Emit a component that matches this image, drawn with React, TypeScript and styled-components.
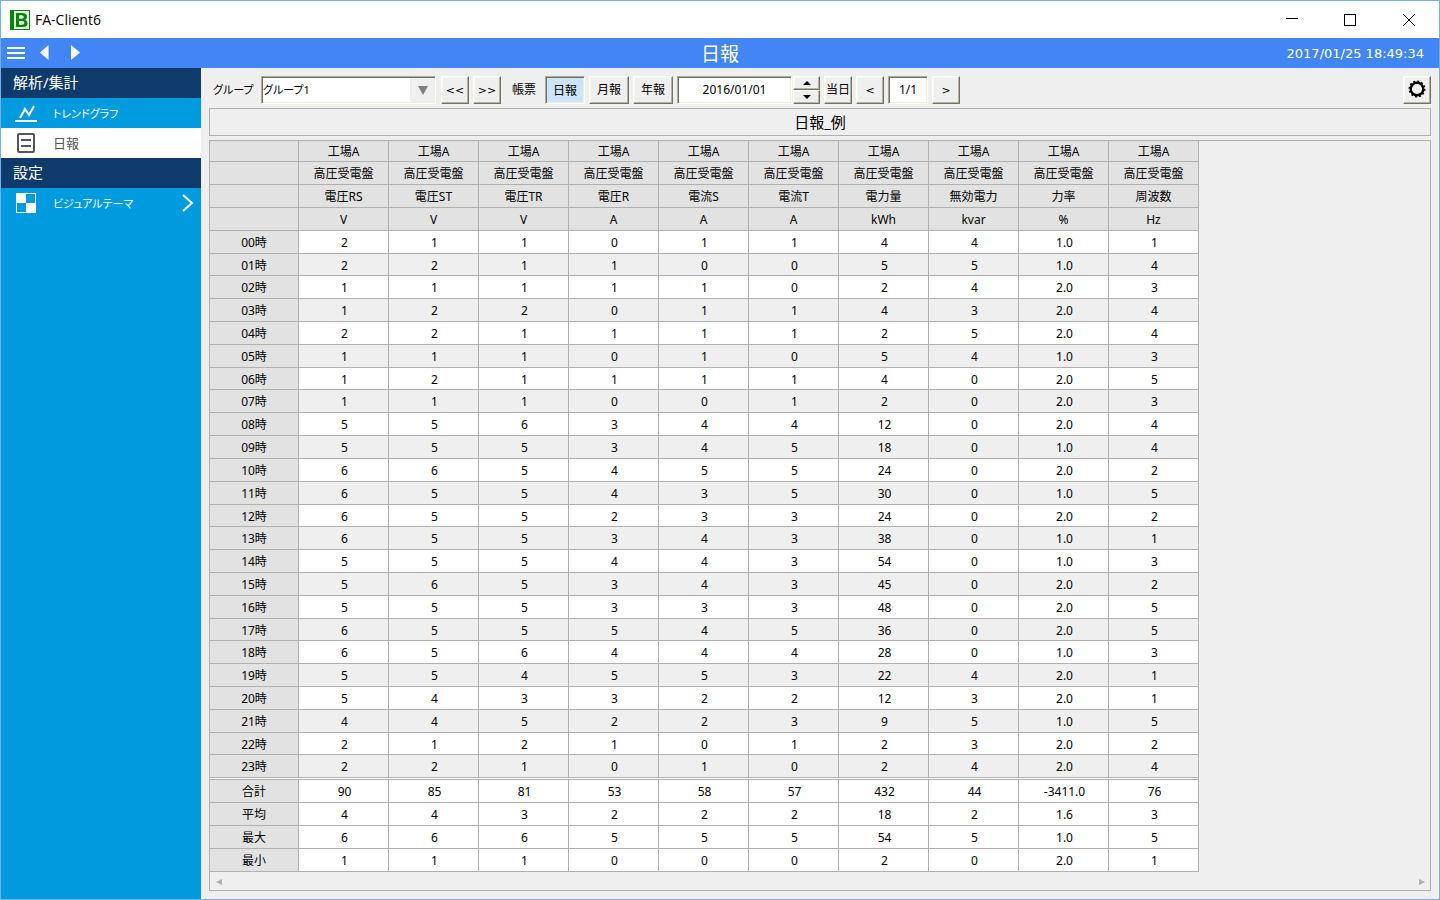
import React, { useState } from "react";
import styled, { createGlobalStyle, css } from "styled-components";

const Global = createGlobalStyle`
  *, *::before, *::after { box-sizing: border-box; }
  body { margin: 0; background: #efefef; }
  body, button, input, select {
    font-family: "Noto Sans", "Noto Sans CJK JP", sans-serif;
    font-size: 12px;
    color: #000;
  }
`;

const Window = styled.div`
  display: flex;
  flex-direction: column;
  min-height: 100vh;
  border: 1px solid #78b0ec;
  background: #efefef;
`;

const TitleBar = styled.header`
  display: flex;
  align-items: center;
  height: 37px;
  padding: 0 8px;
  background: #fff;
`;

const AppName = styled.span`
  flex: 1;
  margin-left: 4px;
  font-family: "Open Sans", sans-serif;
  font-size: 14px;
  line-height: 20px;
`;

const WindowButton = styled.button`
  display: flex;
  align-items: center;
  justify-content: center;
  width: 46px;
  height: 32px;
  padding: 0;
  border: 0;
  background: transparent;
`;

const WindowButtons = styled.div`
  display: flex;
  gap: 12px;
`;

const NavBar = styled.div`
  display: grid;
  grid-template-columns: 1fr auto 1fr;
  align-items: center;
  height: 30px;
  background: #4285f4;
  color: #fff;
`;

const NavButtons = styled.div`
  display: flex;
  align-items: center;
  gap: 14px;
  padding-left: 6px;
`;

const NavButton = styled.button`
  display: flex;
  padding: 0;
  border: 0;
  background: transparent;
`;

const PageTitle = styled.h1`
  margin: 0;
  padding-top: 2px;
  font-size: 19px;
  font-weight: 400;
  line-height: 28px;
`;

const Clock = styled.time`
  justify-self: end;
  padding-right: 15px;
  font-family: "DejaVu Sans", sans-serif;
  font-size: 13px;
`;

const Body = styled.div`
  display: flex;
  flex: 1;
`;

const Sidebar = styled.nav`
  flex: none;
  width: 200px;
  background: #009bde;
`;

const SideHeading = styled.h2`
  height: 30px;
  margin: 0;
  padding-left: 12px;
  background: #0e3a6c;
  color: #fff;
  font-size: 15px;
  font-weight: 400;
  line-height: 28px;
`;

const SideLink = styled.a<{ $active?: boolean }>`
  display: grid;
  grid-template-columns: 22px 1fr auto;
  align-items: center;
  column-gap: 16px;
  height: 30px;
  padding: 0 7px 0 14px;
  background: ${(p) => (p.$active ? "#fff" : "#009bde")};
  color: ${(p) => (p.$active ? "#555" : "#fff")};
  text-decoration: none;

  svg { justify-self: center; }
`;

const SideText = styled.span<{ $kana?: boolean }>`
  padding-bottom: ${(p) => (p.$kana ? 0 : 2)}px;
  font-size: ${(p) => (p.$kana ? 11 : 13)}px;
  font-feature-settings: "palt";
`;

const Main = styled.main`
  display: flex;
  flex: 1;
  flex-direction: column;
  min-width: 0;
  padding: 7px 8px 8px;
`;

const Toolbar = styled.form`
  display: flex;
  align-items: center;
  height: 30px;
  margin-bottom: 3px;
`;

const Label = styled.label`
  width: 44px;
  margin: 0 4px;
  padding-bottom: 2px;
  font-size: 11px;
  font-feature-settings: "palt";
`;

const ReportLabel = styled.span`
  margin: 0 9px 0 11px;
  padding-bottom: 2px;
`;

const raised = css`
  border: 1px solid;
  border-color: #fffff8 #75725f #75725f #fffff8;
  box-shadow: inset -1px -1px 0 #b5b1a4, inset 1px 1px 0 #f8f8f0;
`;

const sunken = css`
  border: 1px solid;
  border-color: #aeab9b #fffff8 #fffff8 #aeab9b;
  box-shadow: inset 1px 1px 0 #716e62, inset -1px -1px 0 #efefdf;
`;

const ToolButton = styled.button<{ $wide?: boolean; $pressed?: boolean; $symbol?: boolean }>`
  display: flex;
  align-items: center;
  justify-content: center;
  width: ${(p) => (p.$wide ? 40 : 28)}px;
  height: 28px;
  padding: ${(p) => (p.$pressed || p.$symbol ? 0 : "0 0 2px")};
  background: ${(p) => (p.$pressed ? "#cce4f8" : "#efefef")};
  white-space: nowrap;
  ${(p) => p.$symbol && css`
    font-family: "DejaVu Sans", sans-serif;
    font-size: 11px;
  `}
  ${(p) => (p.$pressed ? sunken : raised)}
`;

const ButtonGroup = styled.div<{ $gap: number; $before?: number }>`
  display: flex;
  gap: ${(p) => p.$gap}px;
  margin-left: ${(p) => p.$before ?? 0}px;
`;

const SelectBox = styled.div`
  position: relative;
  display: flex;
  width: 175px;
  height: 28px;
  background: #fff;
  ${sunken}
`;

const Select = styled.select`
  flex: 1;
  margin: 1px;
  padding: 0 24px 2px 0;
  border: 0;
  appearance: none;
  background: linear-gradient(#efefef, #efefef) right / 24px 100% no-repeat #fff;
  font-size: 11px;
  font-feature-settings: "palt";
`;

const SelectArrow = styled.svg`
  position: absolute;
  top: 9px;
  right: 7px;
  pointer-events: none;
`;

const TextBox = styled.input<{ $w: number }>`
  width: ${(p) => p.$w}px;
  height: 28px;
  padding: 0 0 2px;
  background: #fff;
  text-align: center;
  ${sunken}
`;

const Spinner = styled.div`
  display: flex;
  flex-direction: column;
`;

const SpinButton = styled.button`
  display: flex;
  align-items: center;
  justify-content: center;
  width: 27px;
  height: 14px;
  padding: 0;
  background: #efefef;
  ${raised}
`;

const Spacer = styled.div`
  flex: 1;
`;

const ReportTitle = styled.h2`
  height: 28px;
  margin: 0 0 4px;
  border: 1px solid #b0b0b0;
  font-size: 15px;
  font-weight: 400;
  line-height: 26px;
  text-align: center;
`;

const Sheet = styled.section`
  display: flex;
  flex: 1;
  flex-direction: column;
  border: 1px solid #b0b0b0;
`;

const Table = styled.table`
  width: 989px;
  border-collapse: separate;
  border-spacing: 0;
  table-layout: fixed;
`;

const cell = css`
  padding: 2px 0 0;
  border: solid #b0b0b0;
  border-width: 0 1px 1px 0;
  font-weight: 400;
  line-height: 18px;
  text-align: center;
`;

const Th = styled.th`
  ${cell}
  background: #e2e2e2;
`;

const Td = styled.td<{ $shade?: boolean }>`
  ${cell}
  padding-left: 2px;
  background: ${(p) => (p.$shade ? "#efefef" : "#fff")};
`;

const Row = styled.tr<{ $height?: number }>`
  height: ${(p) => p.$height ?? 23}px;
`;

const Divider = styled.td`
  height: 2px;
  padding: 0;
  border: solid #b0b0b0;
  border-width: 0 1px 1px 0;
  background: #fff;
`;

const ScrollBar = styled.div`
  display: flex;
  align-items: center;
  justify-content: space-between;
  flex: 1;
  min-height: 16px;
  padding: 2px 5px 0 6px;
`;

const ScrollButton = styled.button`
  display: flex;
  padding: 0;
  border: 0;
  background: transparent;
`;

const names = ["電圧RS", "電圧ST", "電圧TR", "電圧R", "電流S", "電流T", "電力量", "無効電力", "力率", "周波数"];
const units = ["V", "V", "V", "A", "A", "A", "kWh", "kvar", "%", "Hz"];

const hours = [
  "2 1 1 0 1 1 4 4 1.0 1",
  "2 2 1 1 0 0 5 5 1.0 4",
  "1 1 1 1 1 0 2 4 2.0 3",
  "1 2 2 0 1 1 4 3 2.0 4",
  "2 2 1 1 1 1 2 5 2.0 4",
  "1 1 1 0 1 0 5 4 1.0 3",
  "1 2 1 1 1 1 4 0 2.0 5",
  "1 1 1 0 0 1 2 0 2.0 3",
  "5 5 6 3 4 4 12 0 2.0 4",
  "5 5 5 3 4 5 18 0 1.0 4",
  "6 6 5 4 5 5 24 0 2.0 2",
  "6 5 5 4 3 5 30 0 1.0 5",
  "6 5 5 2 3 3 24 0 2.0 2",
  "6 5 5 3 4 3 38 0 1.0 1",
  "5 5 5 4 4 3 54 0 1.0 3",
  "5 6 5 3 4 3 45 0 2.0 2",
  "5 5 5 3 3 3 48 0 2.0 5",
  "6 5 5 5 4 5 36 0 2.0 5",
  "6 5 6 4 4 4 28 0 1.0 3",
  "5 5 4 5 5 3 22 4 2.0 1",
  "5 4 3 3 2 2 12 3 2.0 1",
  "4 4 5 2 2 3 9 5 1.0 5",
  "2 1 2 1 0 1 2 3 2.0 2",
  "2 2 1 0 1 0 2 4 2.0 4",
].map((r) => r.split(" "));

const totals: [string, string[]][] = [
  ["合計", "90 85 81 53 58 57 432 44 -3411.0 76".split(" ")],
  ["平均", "4 4 3 2 2 2 18 2 1.6 3".split(" ")],
  ["最大", "6 6 6 5 5 5 54 5 1.0 5".split(" ")],
  ["最小", "1 1 1 0 0 0 2 0 2.0 1".split(" ")],
];

const shortHours = [1, 6, 12, 17, 22];
const periods = ["日報", "月報", "年報"];

const Logo = () => (
  <svg width="22" height="22" viewBox="0 0 22 22" aria-hidden="true">
    <rect x="1" y="1" width="20" height="20" fill="#0a840a" />
    <rect x="5" y="2" width="15" height="18" fill="#e4f2e4" />
    <path
      fillRule="evenodd"
      fill="#0a840a"
      d="M7 4h6.500q4.500 0 4.500 3.700q0 2.400-2 3.100q2.600 .8 2.600 3.400q0 3.800-4.800 3.800H7zM10 6.300v3.400h2.800q2 0 2-1.700t-2-1.700zM10 12v3.700h3.200q2.200 0 2.200-1.900t-2.200-1.800z"
    />
  </svg>
);

const TrendIcon = () => (
  <svg width="22" height="18" viewBox="0 0 22 18" fill="none" stroke="#fff" strokeWidth="2" aria-hidden="true">
    <path d="M5 14L10 5L14 11L19 2" />
    <path d="M0 17H22" />
  </svg>
);

const ReportIcon = () => (
  <svg width="18" height="20" viewBox="0 0 18 20" fill="none" stroke="#555560" strokeWidth="2" aria-hidden="true">
    <rect x="1" y="1" width="16" height="18" rx="1" />
    <path d="M4 7H14M4 13H14" />
  </svg>
);

const ThemeIcon = () => (
  <svg width="20" height="20" viewBox="0 0 20 20" aria-hidden="true">
    <rect width="20" height="20" fill="#fff" />
    <path fill="#009bde" d="M10 1h9v9h-9zM1 10h9v9H1z" />
  </svg>
);

const GearIcon = () => (
  <svg width="18" height="18" viewBox="-9 -9 18 18" fill="none" stroke="#000" aria-hidden="true">
    <circle r="6.300" strokeWidth="2.400" />
    <circle r="7.800" strokeWidth="1.400" strokeDasharray="2 2.084" />
  </svg>
);

export default function App() {
  const [group, setGroup] = useState("グループ1");
  const [period, setPeriod] = useState("日報");
  const [date, setDate] = useState("2016/01/01");
  const [page, setPage] = useState("1/1");

  return (
    <Window>
      <Global />
      <TitleBar>
        <Logo />
        <AppName>FA-Client6</AppName>
        <WindowButtons>
          <WindowButton aria-label="最小化">
            <svg width="12" height="12" stroke="#000"><path d="M0 4.500H12" /></svg>
          </WindowButton>
          <WindowButton aria-label="最大化">
            <svg width="12" height="12" stroke="#000" fill="none"><rect x=".5" y=".5" width="11" height="11" /></svg>
          </WindowButton>
          <WindowButton aria-label="閉じる">
            <svg width="14" height="12" stroke="#000"><path d="M2 0L14 12M14 0L2 12" /></svg>
          </WindowButton>
        </WindowButtons>
      </TitleBar>

      <NavBar>
        <NavButtons>
          <NavButton aria-label="メニュー">
            <svg width="18" height="12" fill="#fff"><path d="M0 0h18v2H0zM0 5h18v2H0zM0 10h18v2H0z" /></svg>
          </NavButton>
          <NavButton aria-label="戻る">
            <svg width="10" height="16" fill="#fff"><path d="M9.500 0v15L1 7.500z" /></svg>
          </NavButton>
          <NavButton aria-label="進む">
            <svg width="25" height="16" fill="#fff"><path d="M8 0v15l9-7.500z" /></svg>
          </NavButton>
        </NavButtons>
        <PageTitle>日報</PageTitle>
        <Clock>2017/01/25 18:49:34</Clock>
      </NavBar>

      <Body>
        <Sidebar>
          <SideHeading>解析/集計</SideHeading>
          <SideLink href="#trend"><TrendIcon /><SideText $kana>トレンドグラフ</SideText></SideLink>
          <SideLink href="#daily" $active><ReportIcon /><SideText>日報</SideText></SideLink>
          <SideHeading>設定</SideHeading>
          <SideLink href="#theme">
            <ThemeIcon />
            <SideText $kana>ビジュアルテーマ</SideText>
            <svg width="12" height="18" fill="none" stroke="#fff" strokeWidth="2" aria-hidden="true">
              <path d="M1 1L10 9L1 17" />
            </svg>
          </SideLink>
        </Sidebar>

        <Main>
          <Toolbar onSubmit={(e) => e.preventDefault()}>
            <Label htmlFor="group">グループ</Label>
            <SelectBox>
              <Select id="group" value={group} onChange={(e) => setGroup(e.target.value)}>
                <option>グループ1</option>
              </Select>
              <SelectArrow width="10" height="9" fill="#808080" aria-hidden="true">
                <path d="M0 0h10L5 9z" />
              </SelectArrow>
            </SelectBox>
            <ButtonGroup $gap={4} $before={5}>
              <ToolButton type="button" $symbol>&lt;&lt;</ToolButton>
              <ToolButton type="button" $symbol>&gt;&gt;</ToolButton>
            </ButtonGroup>
            <ReportLabel>帳票</ReportLabel>
            <ButtonGroup $gap={4}>
              {periods.map((p) => (
                <ToolButton
                  key={p}
                  type="button"
                  $wide
                  $pressed={p === period}
                  aria-pressed={p === period}
                  onClick={() => setPeriod(p)}
                >
                  {p}
                </ToolButton>
              ))}
            </ButtonGroup>
            <ButtonGroup $gap={1} $before={4}>
              <TextBox $w={115} aria-label="日付" value={date} onChange={(e) => setDate(e.target.value)} />
              <Spinner>
                <SpinButton type="button" aria-label="次の日">
                  <svg width="8" height="4"><path d="M4 0l4 4H0z" /></svg>
                </SpinButton>
                <SpinButton type="button" aria-label="前の日">
                  <svg width="8" height="4"><path d="M0 0h8L4 4z" /></svg>
                </SpinButton>
              </Spinner>
            </ButtonGroup>
            <ButtonGroup $gap={4} $before={4}>
              <ToolButton type="button">当日</ToolButton>
              <ToolButton type="button" $symbol>&lt;</ToolButton>
              <TextBox $w={40} aria-label="ページ" value={page} onChange={(e) => setPage(e.target.value)} />
              <ToolButton type="button" $symbol>&gt;</ToolButton>
            </ButtonGroup>
            <Spacer />
            <ToolButton type="button" aria-label="設定"><GearIcon /></ToolButton>
          </Toolbar>

          <ReportTitle>日報_例</ReportTitle>

          <Sheet>
            <Table>
              <colgroup>
                <col style={{ width: 89 }} />
                {names.map((n) => <col key={n} />)}
              </colgroup>
              <thead>
                <Row $height={21}>
                  <Th />
                  {names.map((n) => <Th key={n}>工場A</Th>)}
                </Row>
                <Row>
                  <Th />
                  {names.map((n) => <Th key={n}>高圧受電盤</Th>)}
                </Row>
                <Row>
                  <Th />
                  {names.map((n) => <Th key={n} scope="col">{n}</Th>)}
                </Row>
                <Row>
                  <Th />
                  {units.map((u, i) => <Th key={i}>{u}</Th>)}
                </Row>
              </thead>
              <tbody>
                {hours.map((values, h) => (
                  <Row key={h} $height={shortHours.includes(h) ? 22 : 23}>
                    <Th scope="row">{String(h).padStart(2, "0")}時</Th>
                    {values.map((v, i) => <Td key={i} $shade={h % 2 === 1}>{v}</Td>)}
                  </Row>
                ))}
              </tbody>
              <tfoot>
                <tr><Divider colSpan={11} /></tr>
                {totals.map(([label, values]) => (
                  <Row key={label}>
                    <Th scope="row">{label}</Th>
                    {values.map((v, i) => <Td key={i}>{v}</Td>)}
                  </Row>
                ))}
              </tfoot>
            </Table>
            <ScrollBar>
              <ScrollButton aria-label="左へスクロール">
                <svg width="6" height="6" fill="#b0b0b0"><path d="M6 0v6L0 3z" /></svg>
              </ScrollButton>
              <ScrollButton aria-label="右へスクロール">
                <svg width="6" height="6" fill="#b0b0b0"><path d="M0 0v6l6-3z" /></svg>
              </ScrollButton>
            </ScrollBar>
          </Sheet>
        </Main>
      </Body>
    </Window>
  );
}
